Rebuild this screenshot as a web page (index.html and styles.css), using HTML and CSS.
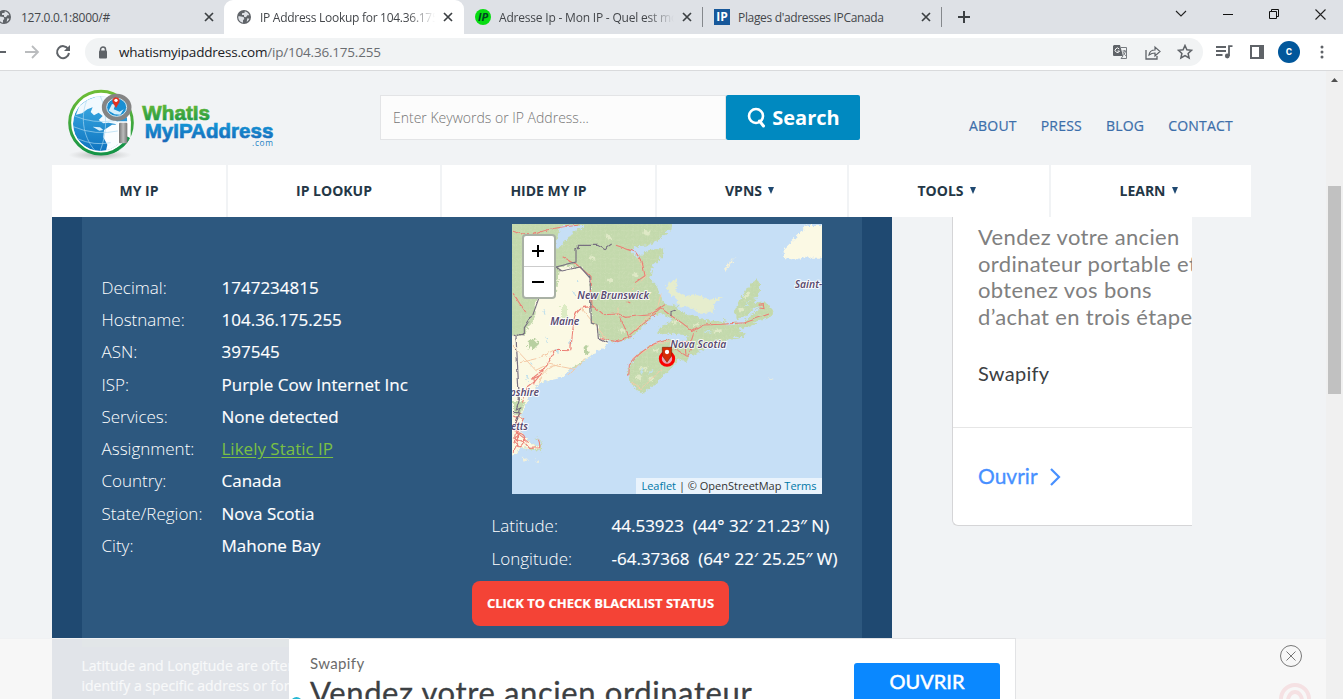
FILE: index.html
```html
<!DOCTYPE html>
<html lang="fr">
<head>
<meta charset="utf-8">
<title>IP Address Lookup for 104.36.175.255</title>
<link rel="stylesheet" href="styles.css">
</head>
<body>
<svg class="defs" width="0" height="0">
  <symbol id="globe" viewBox="0 0 24 24"><circle cx="12" cy="12" r="10.500" fill="#5f6368"/><path d="M3.500 11c3 0 5 1 8 1l1 3-2 2v3.500C6 20 3 16 3.500 11zM13 3.500c3 .5 6 3 7 6h-3l-2 3-3-1V9H9V6.500l4-1zM17 14l3 .5c-1 2-2 3.500-4 4.500z" fill="#dee1e6"/></symbol>
  <symbol id="x" viewBox="0 0 10 10"><path d="M1 1l8 8M9 1l-8 8" stroke="#3c4043" stroke-width="1.7"/></symbol>
</svg>
<div class="tabs">
  <div class="tab t1"><svg class="fav"><use href="#globe"/></svg><span>127.0.0.1:8000/#</span><svg class="close"><use href="#x"/></svg></div>
  <div class="tab t2"><svg class="fav"><use href="#globe"/></svg><span class="fade">IP Address Lookup for 104.36.175</span><svg class="close"><use href="#x"/></svg></div>
  <div class="tab t3"><i class="fav green">IP</i><span class="fade">Adresse Ip - Mon IP - Quel est mon</span><svg class="close"><use href="#x"/></svg></div>
  <div class="tab t4"><i class="fav blue">IP</i><span>Plages d'adresses IPCanada</span><svg class="close"><use href="#x"/></svg></div>
  <svg class="plus" width="14" height="14"><path d="M7 1v12M1 7h12" stroke="#3c4043" stroke-width="2"/></svg>
  <div class="window">
    <svg width="12" height="8"><path d="M1 1l5 5 5-5" fill="none" stroke="#222" stroke-width="1.1"/></svg>
    <svg width="10" height="8"><path d="M0 4.5h10" stroke="#111"/></svg>
    <svg width="10" height="10"><path d="M.5 2.500h7v7h-7zM2.500 2.500v-2h7v7h-2" fill="none" stroke="#111"/></svg>
    <svg width="11" height="11"><path d="M.5.5l10 10M10.500.5l-10 10" stroke="#222" stroke-width="1.1"/></svg>
  </div>
</div>
<div class="toolbar">
  <svg class="back" width="7" height="16"><path d="M0 8h6" stroke="#5f6368" stroke-width="2"/></svg>
  <svg class="fwd" width="16" height="16" fill="none" stroke="#babcbe" stroke-width="1.8"><path d="M1 8h12M8 2l6 6-6 6"/></svg>
  <svg class="reload" width="16" height="16"><path d="M13.200 5A6 6 0 1 0 14 9" fill="none" stroke="#5f6368" stroke-width="2"/><path d="M15 1v6H9z" fill="#5f6368"/></svg>
  <div class="omni">
    <svg class="lock" width="10" height="13"><path d="M2.500 5V3.500a2.500 2.500 0 0 1 5 0V5" fill="none" stroke="#5f6368" stroke-width="1.500"/><rect x="1" y="4.500" width="8" height="8" rx="1" fill="#5f6368"/></svg>
    <span class="url">whatismyipaddress.com<em>/ip/104.36.175.255</em></span>
    <svg class="tr" width="14" height="14"><path d="M1 0h6l3 11H1a1 1 0 0 1-1-1V1z" fill="#5f6368"/><path d="M8 2.500h5.500v11H8l2-2.500M9.500 6H13M11.300 5v1.500M12.500 6c-.5 3-2 4-3 4.500M10 7c1 2 2 3 3 4" fill="none" stroke="#777b80"/><path d="M6.200 4A2.200 2.200 0 1 0 6.500 6H4.500" fill="none" stroke="#fff"/></svg>
    <svg class="share" width="16" height="15"><path d="M1 5v9h11v-3" fill="none" stroke="#5f6368" stroke-width="1.300"/><path d="M4 10c.5-3.500 3-5 6-5V2l5 4.500-5 4.500V8C7.500 8 6 8.500 4 10z" fill="none" stroke="#5f6368" stroke-width="1.200"/></svg>
    <svg width="16" height="16"><path d="M8 1.500l1.900 4.300 4.600.5-3.400 3.100 1 4.600L8 11.600 3.900 14l1-4.600L1.500 6.300l4.600-.5z" fill="none" stroke="#5f6368" stroke-width="1.500"/></svg>
  </div>
  <div class="tools">
    <svg width="17" height="14"><path d="M0 2h10M0 6h10M0 10h6.500M13 11V1.200h3.500" fill="none" stroke="#5f6368" stroke-width="1.800"/><circle cx="11.300" cy="11" r="2.400" fill="#5f6368"/></svg>
    <svg width="14" height="14"><path d="M0 0h14v14H0zM2 2v10h7V2z" fill="#5f6368" fill-rule="evenodd"/></svg>
    <b class="avatar">c</b>
    <svg class="dots" width="4" height="14" fill="#5f6368"><circle cx="2" cy="2" r="1.500"/><circle cx="2" cy="7" r="1.500"/><circle cx="2" cy="12" r="1.500"/></svg>
  </div>
</div>
<div class="view">
<div class="page">
  <header>
    <svg class="logo" width="240" height="90" viewBox="0 0 720 270">
      <defs>
        <linearGradient id="lg" x2="0" y2="1"><stop stop-color="#6ebd35"/><stop offset="1" stop-color="#159447"/></linearGradient>
        <linearGradient id="lb" x2="0" y2="1"><stop stop-color="#12a0dc"/><stop offset="1" stop-color="#1767b8"/></linearGradient>
        <linearGradient id="lm"><stop stop-color="#777"/><stop offset=".5" stop-color="#bbb"/><stop offset="1" stop-color="#777"/></linearGradient>
        <linearGradient id="sea" x2="0" y2="1"><stop stop-color="#3fb0e6"/><stop offset="1" stop-color="#0f74c0"/></linearGradient>
        <radialGradient id="sh"><stop stop-color="#888" stop-opacity=".6"/><stop offset="1" stop-color="#aaa" stop-opacity="0"/></radialGradient>
        <clipPath id="ball"><circle cx="151" cy="131" r="82"/></clipPath>
      </defs>
      <ellipse cx="150" cy="225" rx="95" ry="16" fill="url(#sh)"/>
      <circle cx="153" cy="128" r="94" fill="#fff" stroke="url(#lg)" stroke-width="9"/>
      <g clip-path="url(#ball)">
        <circle cx="151" cy="131" r="82" fill="url(#sea)"/>
        <path d="M88 78L112 60 150 46H180L176 70 160 82 168 100 190 118 210 130V150L196 132 176 128 160 130 146 120 158 108 146 98 132 106 122 96 128 82 112 88 96 100 78 104z" fill="#f1f9fe"/>
        <path d="M162 150L186 134 210 134V196L186 208 168 212 172 194 160 172z" fill="#fafdff"/>
        <path d="M128 140L150 142 160 150 148 152z" fill="#d8eefa"/>
        <path d="M70 140q65 28 140 12M74 108q55 24 120 14M113 55c-22 48-17 112 22 157M150 46c24 52 21 115 0 168M82 176q50 22 100 12" fill="none" stroke="#a9d8f2" stroke-width="2"/>
      </g>
      <path d="M202 124h40v48l-36 40z" fill="#fff"/>
      <path d="M236 172a94 94 0 0 1-44 41" fill="none" stroke="#159447" stroke-width="9"/>
      <rect x="207" y="128" width="25" height="62" rx="3" fill="url(#lm)"/>
      <ellipse cx="200" cy="82" rx="38" ry="34" fill="#188fd3" stroke="#848484" stroke-width="13"/>
      <ellipse cx="200" cy="82" rx="30" ry="27" fill="none" stroke="#d9e6ec" stroke-width="3"/>
      <path d="M176 92l10-20 10 2-5 14 18 7 12-7-10 16-17-1z" fill="#d5effc"/>
      <path d="M198 84l-10-17a11 11 0 1 1 20 0z" fill="#e03121"/><circle cx="198" cy="61" r="5" fill="#fff"/>
      <text x="277" y="121" class="logo-a" textLength="203" lengthAdjust="spacingAndGlyphs" fill="url(#lg)" stroke="url(#lg)">WhatIs</text>
      <text x="284" y="174" class="logo-a" textLength="386" lengthAdjust="spacingAndGlyphs" fill="url(#lb)" stroke="url(#lb)">MyIPAddress</text>
      <text x="606" y="198" class="logo-c" textLength="63">.com</text>
    </svg>
    <div class="search"><div class="field">Enter Keywords or IP Address...</div><div class="go"><svg width="19" height="22"><circle cx="9" cy="9" r="7" fill="none" stroke="#fff" stroke-width="2.600"/><path d="M12.500 14l4 5" stroke="#fff" stroke-width="3" stroke-linecap="round"/></svg>Search</div></div>
    <div class="links"><a>ABOUT</a><a>PRESS</a><a>BLOG</a><a>CONTACT</a></div>
  </header>
  <nav><a>MY IP</a><a>IP LOOKUP</a><a>HIDE MY IP</a><a>VPNS<i></i></a><a>TOOLS<i></i></a><a>LEARN<i></i></a></nav>
  <main>
    <section class="panel">
      <div class="inner">
        <dl class="info">
          <dt>Decimal:</dt><dd>1747234815</dd>
          <dt>Hostname:</dt><dd>104.36.175.255</dd>
          <dt>ASN:</dt><dd>397545</dd>
          <dt>ISP:</dt><dd>Purple Cow Internet Inc</dd>
          <dt>Services:</dt><dd>None detected</dd>
          <dt>Assignment:</dt><dd><u>Likely Static IP</u></dd>
          <dt>Country:</dt><dd>Canada</dd>
          <dt>State/Region:</dt><dd>Nova Scotia</dd>
          <dt>City:</dt><dd>Mahone Bay</dd>
        </dl>
        <div class="geo">
          <div class="map">
            <svg width="310" height="270" viewBox="21 27 930 810">
              <defs>
                <filter id="rough" x="-5%" y="-5%" width="110%" height="110%"><feTurbulence baseFrequency=".07" numOctaves="2" seed="4"/><feDisplacementMap in="SourceGraphic" scale="16" xChannelSelector="R" yChannelSelector="G"/></filter>
                <filter id="wiggle"><feTurbulence baseFrequency=".04" numOctaves="2" seed="7"/><feDisplacementMap in="SourceGraphic" scale="9" xChannelSelector="R" yChannelSelector="G"/></filter>
                <pattern id="forest" width="14" height="14" patternUnits="userSpaceOnUse"><rect width="14" height="14" fill="#c3d9ac"/><path d="M0 0h14M0 0v14" stroke="#d0e0bc" stroke-width="1.500"/></pattern>
              </defs>
              <rect x="21" y="27" width="930" height="810" fill="#c6dff6"/>
              <g filter="url(#rough)">
                <path d="M0 10H500L492 42 455 72 430 88 400 90 372 100 345 88 372 100 395 125 418 106 475 92 468 122 440 150 432 190 455 213 465 250 478 264 515 270 520 284 560 298 600 312 650 318 652 302 662 325 705 322 735 298 765 270 742 276 718 300 690 310 684 284 700 252 735 200 750 190 762 200 762 228 740 262 775 256 804 285 798 297 765 312 735 328 695 340 718 354 710 362 665 370 640 385 590 402 545 420 540 438 520 425 490 460 450 500 405 532 370 500 364 455 390 418 440 385 488 368 500 372 486 392 540 374 545 358 450 350 470 328 500 312 466 292 435 302 405 335 380 362 330 378 290 370 300 392 275 398 260 412 235 430 222 448 190 455 175 480 160 470 130 490 100 500 80 520 60 560 45 590 48 620 34 638 60 668 100 694 104 670 88 664 105 680 105 706 70 700 40 692 28 715 0 720z" fill="url(#forest)"/>
                <path d="M160 150L225 152 252 184 254 318 275 328 280 365 305 372 295 395 260 412 235 430 190 455 175 480 130 490 100 500 80 520 60 560 45 590 48 620 34 638 60 668 104 698 40 694 28 715 0 720V360L55 355 85 300 90 248 150 225z" fill="#fbf9e4"/>
                <path d="M145 90L165 27h70l-50 35-30 35z" fill="#c6dff6"/>
                <path d="M480 208L512 186 508 222 535 240 570 234 610 248 648 243 622 262 620 290 580 290 540 268 520 274 512 246 492 236z" fill="#e6edcd"/>
                <path d="M300 60l20 6M410 45l22 8M250 120l14 8M300 190l18 2M380 170l12 10M280 230l14 6M340 340l18 4M500 315l22 4M560 330l16-8M620 345l24-3M400 455l24 4M425 490l16-8M390 480l12 8M715 245l12-14M700 285l10-10M440 405l18-4" stroke="#dfe9c6" stroke-width="10"/>
                <path d="M900 27H960V125H915L900 122 865 132 835 126 832 98 870 62z" fill="#fbf9e4"/>
                <path d="M652 158l20-25 16-10-14 16-18 28zM47 722l20 8-14 4zM90 730l14 7H92zM785 486l18 1-8 2z" fill="#f3f1da"/>
                <path d="M65 375l20-8 12 13-10 20-20-3zM233 390l12 5 3 18-13 5z" fill="#b8d0a1"/>
                <path d="M165 267h18v38h-18z" fill="#dcebc3"/>
                <path d="M21 555h35l-14 38H21z" fill="#c5dbae"/>
                <path d="M120 360l4 20M200 220l6 18M150 400l4 10M70 440l6 8M190 370l3 12M110 280l4 16M215 190l4 10M60 480l4 12M410 455l-8 20M440 460l-8 12M595 345l18 3M720 270l10-16" stroke="#c0e0ec" stroke-width="4"/>
              </g>
              <g fill="none" filter="url(#wiggle)">
                <path d="M42 440l60-14 45-24M21 390l70 75 40-20 75 15M100 500q15-50 65-55M225 275l75 92M336 275v28M365 365l80-80M400 130l20 50-65 70M465 235l-10 40M380 430l65-45 55-8M375 500l32 22 60-60M185 480l55-52" stroke="#f4caa7" stroke-width="3"/>
                <path d="M21 46q50 18 75 5T220 27M170 122l40 22 45 38 3 86 32 28 48-2 20 10 76-8 43-30M343 305l25 57 98-85 26 20 38 25 30 25 35-20 52-2 70-5 72-26M330 88l58 20 20 28 9 43-30 21M265 274q-60-10-63 55l-8 75-44-1-40 65-25 30-20 15-15 45M500 377l55 0 8-25M510 400l35 22M535 376l5 40M545 420l12-18M285 368l50 9 45-17M21 232q25 35 40 60M78 490l25-12 10-18-30 24 4 24M45 590q-20 18-10 55t-14 65M21 600l35 10-22 40M35 650q30 5 18 30t-22 0 4-30M21 665l35 14 15 18 30-2q2-14-5-26M21 640l50 40M50 620l-25 65M760 276l14 2-2-12-14 2M490 372q-68 8-120 75l-2 35M365 260l8 4" stroke="#ec7f75" stroke-width="3.200"/>
                <path d="M317 87l-20 14-22-13H217v10h-7v40l-60 15 18 12 55-12 29 33 4 135 17 6 4 40 28 14M98 248l-18 50-25 37v21H38l-15 6M30 362l10 190-9 30 13-6-5 20-14 40M495 300v-10l15-5M21 590h23" stroke="#777080" stroke-width="3.500"/>
              </g>
              <g class="place">
                <text x="217" y="252" textLength="215">New Brunswick</text><text x="136" y="330" textLength="87">Maine</text><text x="496" y="399" textLength="168">Nova Scotia</text><text x="869" y="218">Saint-</text><text x="14" y="544" textLength="88">pshire</text><text x="18" y="645" textLength="51">etts</text>
              </g>
              <circle cx="486" cy="431" r="20" fill="#e7a5b5" stroke="#fb0000" stroke-width="9"/>
              <path d="M472 397h28v25l-14 20-14-20z" fill="#d62d05" stroke="#7e270a" stroke-width="2"/><circle cx="486" cy="411" r="6.500" fill="#fff"/>
            </svg>
            <div class="zoomer"><b><svg width="12" height="12"><path d="M6 0v12M0 6h12" stroke="#000" stroke-width="2"/></svg></b><b><svg width="12" height="12"><path d="M0 6h12" stroke="#000" stroke-width="2"/></svg></b></div>
            <div class="credit"><a>Leaflet</a> | © OpenStreetMap <a>Terms</a></div>
          </div>
          <dl class="coords">
            <dt>Latitude:</dt><dd>44.53923&nbsp; (44° 32′ 21.23″ N)</dd>
            <dt>Longitude:</dt><dd>-64.37368&nbsp; (64° 22′ 25.25″ W)</dd>
          </dl>
          <div class="blacklist">CLICK TO CHECK BLACKLIST STATUS</div>
        </div>
      </div>
    </section>
    <aside>
      <p>Vendez votre ancien<br>ordinateur portable et<br>obtenez vos bons<br>d’achat en trois étapes</p>
      <h4>Swapify</h4>
      <div class="open"><span>Ouvrir</span><svg width="12" height="20"><path d="M2 2l8 8-8 8" fill="none" stroke="#4790ff" stroke-width="2.200"/></svg></div>
    </aside>
  </main>
  <footer>
    <div class="veil">Latitude and Longitude are often<br>identify a specific address or for l</div>
    <div class="banner">
      <div class="copy"><small>Swapify</small><strong>Vendez votre ancien ordinateur</strong></div>
      <div class="cta">OUVRIR</div>
      <i class="dot"></i>
    </div>
    <div class="rest">
      <svg width="24" height="24" fill="none" stroke="#777"><circle cx="12" cy="12" r="10.500"/><path d="M7.500 7.500l9 9M16.500 7.500l-9 9"/></svg>
      <svg width="34" height="34" fill="none" stroke="#f5e1e3"><circle cx="17" cy="17" r="14" stroke-width="4"/><ellipse cx="17" cy="19" rx="7" ry="9" stroke-width="4"/></svg>
    </div>
  </footer>
</div>
<div class="scroll"><svg width="17" height="17"><path d="M5 11l3.500-4L12 11z" fill="#505050"/></svg><div class="thumb"></div></div>
</div>
</body>
</html>
```
FILE: styles.css
```css
* { box-sizing: border-box; }
body { margin: 0; width: 1343px; height: 699px; overflow: hidden; display: flex; flex-direction: column; background: #f1f3f5; font-family: "Open Sans", sans-serif; }
svg { display: block; flex: none; }
.defs { position: absolute; }
p, h4, dl, dd { margin: 0; }

/* tab strip */
.tabs { flex: none; height: 34px; background: #dee1e6; display: flex; align-items: center; font-size: 12px; letter-spacing: -.28px; color: #44474b; }
.tab { height: 34px; display: flex; align-items: center; white-space: nowrap; }
.tab span { flex: 1; overflow: hidden; margin: 0 8px; }
.t1 { width: 224px; padding-right: 10px; }
.t1 .fav { margin-left: -4px; }
.t1 span { margin-left: 9px; }
.t2 { width: 240px; padding: 0 11px 0 12px; background: #fff; border-radius: 9px 9px 0 0; }
.t3 { width: 239px; padding: 0 10px 0 11px; height: 20px; border-right: 1px solid #85888c; letter-spacing: -.2px; }
.t4 { width: 239px; padding: 0 10px 0 11px; height: 20px; border-right: 1px solid #85888c; letter-spacing: -.34px; }
.fade { -webkit-mask-image: linear-gradient(90deg, #000 84%, transparent); mask-image: linear-gradient(90deg, #000 84%, transparent); }
.fav { width: 16px; height: 16px; flex: none; }
.close { width: 10px; height: 10px; }
i.fav { color: #fff; font: bold 12px/16px "Open Sans", sans-serif; text-align: center; background: #17589a; letter-spacing: 0; }
i.green { border-radius: 50%; background: #08dc12; color: #042; font-style: italic; font-size: 11px; }
.plus { margin-left: 15px; }
.window { margin-left: auto; padding: 0 17px 6px 0; display: flex; align-items: center; gap: 36px; }

/* address bar */
.toolbar { flex: none; height: 37px; background: #fff; border-bottom: 1px solid #d9dadc; display: flex; align-items: center; }
.fwd { margin-left: 17px; }
.reload { margin-left: 15px; }
.omni { margin-left: 14px; width: 1118px; height: 28px; border-radius: 14px; background: #f1f3f4; display: flex; align-items: center; padding: 0 10px 0 13px; }
.url { margin: 0 auto 0 11px; font-size: 13.5px; letter-spacing: -.2px; color: #202124; }
.url em { font-style: normal; color: #6a6d71; }
.share { margin: 0 16px 0 18px; }
.tools { display: flex; align-items: center; margin-left: 13px; }
.tools svg + svg { margin-left: 17px; }
.avatar { width: 22px; height: 22px; border-radius: 50%; background: #01579b; color: #fff; font: 500 12px/21px Roboto, sans-serif; text-align: center; margin: 0 20px 0 14px; }

/* page */
.view { flex: 1; min-height: 0; display: flex; }
.page { width: 1326px; display: flex; flex-direction: column; overflow: hidden; }
header { height: 94px; flex: none; display: flex; padding-left: 50px; }
.logo { margin-top: 9px; }
.logo-a { font: bold 62px "Liberation Sans", sans-serif; stroke-width: 2px; }
.logo-c { font: 25px "Open Sans", sans-serif; fill: #1c80c4; }
.search { display: flex; margin: 24px 0 0 90px; width: 480px; height: 45px; }
.field { width: 346px; border: 1px solid #e3e4e6; background: #fcfcfc; padding-left: 12px; font-size: 14px; font-weight: 300; line-height: 44px; color: #757575; }
.go { width: 134px; background: #0089c0; color: #fff; border-radius: 2px; font-weight: 700; font-size: 20px; display: flex; align-items: center; justify-content: center; gap: 6px; padding-left: 1px; }
.links { display: flex; gap: 24px; margin: 46px 0 0 109px; font-size: 14px; line-height: 18px; font-weight: 500; color: #3c6eaa; -webkit-text-stroke: .2px; letter-spacing: .2px; }
nav { flex: none; height: 52px; margin-left: 52px; display: grid; grid-template-columns: 174px 212px 213px 190px 200px 200px; gap: 2px; }
nav a { background: #fff; display: flex; align-items: center; justify-content: center; padding: 0 0 2px; font-size: 14px; font-weight: 700; color: #243746; }
nav a:nth-child(n+4) { padding-right: 5px; }
nav i { border: 3.5px solid transparent; border-top: 7px solid #1f4971; border-bottom: 0; margin-left: 6px; }
main { flex: none; height: 421px; display: flex; padding-left: 52px; }
.panel { width: 840px; background: #1f4971; padding: 0 30px; }
.inner { height: 421px; background: #2d587f; color: #fff; display: flex; padding-left: 19.5px; }
dl { display: grid; grid-template-columns: 120px auto; grid-auto-rows: 32.25px; line-height: 32px; font-size: 17px; align-content: start; white-space: nowrap; }
dt { font-weight: 300; }
dd { font-weight: 500; -webkit-text-stroke: .15px; }
dd u { color: #7bc043; font-weight: 400; text-underline-offset: 2px; -webkit-text-stroke: 0; }
.info { width: 370.5px; padding-top: 54.8px; }
.geo { padding-top: 7px; }
.map { width: 310px; height: 270px; margin-left: 40px; position: relative; overflow: hidden; }
.place { font: italic 600 31px "Noto Sans", sans-serif; fill: #594b70; stroke: #fff; stroke-width: 5px; paint-order: stroke; }
.zoomer { position: absolute; left: 10px; top: 10px; width: 34px; border: 2px solid #a9b1a5; border-radius: 4px; overflow: hidden; background: #fff; }
.zoomer b { display: flex; align-items: center; justify-content: center; height: 30px; padding-right: 2px; }
.zoomer b + b { border-top: 1px solid #ccc; height: 31px; }
.credit { position: absolute; right: 0; bottom: 0; height: 16px; padding: 0 5.5px; background: #e9f3fc; color: #333; font-size: 11px; line-height: 16px; white-space: nowrap; }
.credit a { color: #0078a8; }
.coords { padding: 16px 0 0 19.5px; grid-auto-rows: 32.6px; }
.blacklist { width: 257px; height: 45px; margin-top: 5.8px; background: #f44336; border-radius: 8px; font-size: 13px; line-height: 45px; font-weight: 700; text-align: center; white-space: nowrap; -webkit-text-stroke: .2px; }

/* side advert */
aside { width: 240px; height: 309px; margin-left: 60px; background: #fff; border-left: 1px solid #d5d5d7; border-bottom: 1px solid #d5d5d7; border-radius: 0 0 0 6px; overflow: hidden; font-family: Lato, sans-serif; white-space: nowrap; }
aside p { padding: 7px 0 0 25px; height: 141px; font-size: 22px; letter-spacing: .35px; line-height: 26.5px; color: #808080; }
aside h4 { padding-left: 25px; height: 70px; font-weight: 400; font-size: 20px; letter-spacing: .3px; line-height: 30px; color: #3c4043; border-bottom: 1px solid #e6e6e6; }
.open { height: 97px; padding-left: 25px; display: flex; align-items: center; gap: 11px; color: #4790ff; font-size: 21px; }
.open span { padding-bottom: 3px; -webkit-text-stroke: .3px; }

/* bottom banner */
footer { flex: none; height: 61px; display: flex; background: #f7f7f7; border-top: 1px solid #f0f1f3; }
.veil { width: 237px; margin-left: 52px; padding: 17px 0 0 29.5px; background: linear-gradient(90deg, #e1e4e9 30px, #e2e6e8 30px) 0 0/100% 8px no-repeat #e1e4e9; font-size: 14px; line-height: 20px; color: #f8f9fa; white-space: nowrap; overflow: hidden; -webkit-text-stroke: .2px; }
.banner { position: relative; width: 727px; background: #fff; border: 1px solid #e2e3e5; border-width: 1px 1px 0 0; margin-top: -1px; display: flex; overflow: hidden; font-family: Lato, sans-serif; }
.copy { width: 565px; padding: 15px 0 0 21px; white-space: nowrap; }
.copy small { display: block; font-size: 15px; letter-spacing: .35px; line-height: 18px; color: #6b6b6b; }
.copy strong { display: block; font-weight: 400; font-size: 31px; letter-spacing: .6px; line-height: 41px; color: #3c4043; -webkit-text-stroke: .3px; }
.cta { margin-top: 24px; width: 146px; height: 50px; border-radius: 3px; background: #0a88ff; color: #fff; font-size: 20px; line-height: 37px; text-align: center; -webkit-text-stroke: .5px; }
.dot { position: absolute; left: 2px; top: 58px; width: 11px; height: 11px; border: 2px solid #25b7d3; border-radius: 50%; }
.rest { width: 310px; padding: 5px 23px 0 0; display: flex; flex-direction: column; align-items: flex-end; gap: 14px; }
.rest svg + svg { margin-right: -9px; }
.scroll { width: 17px; background: #f0f0f0; }
.thumb { width: 13px; height: 208px; margin: 98px 0 0 2px; background: #c1c1c1; }
```
